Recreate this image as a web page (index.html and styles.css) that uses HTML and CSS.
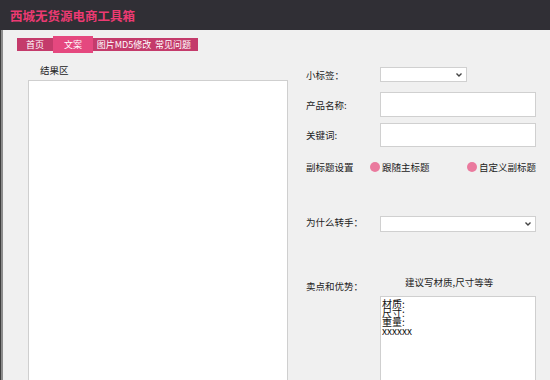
FILE: index.html
```html
<!DOCTYPE html>
<html lang="zh-CN">
<head>
<meta charset="utf-8">
<title>西城无货源电商工具箱</title>
<link rel="stylesheet" href="styles.css">
</head>
<body>
<header class="titlebar">西城无货源电商工具箱</header>
<div class="window">
  <nav class="tabs">
    <span class="tab tab-home">首页</span>
    <span class="tab tab-active">文案</span>
    <span class="tab tab-md5">图片MD5修改</span>
    <span class="tab tab-faq">常见问题</span>
  </nav>
  <div class="content">
    <section class="left">
      <div class="left-label">结果区</div>
      <textarea class="result" readonly></textarea>
    </section>
    <section class="form">
      <div class="row row-tag">
        <label class="lbl">小标签：</label>
        <div class="select select-small">
          <svg class="chev" width="8" height="6" viewBox="0 0 8 6"><path d="M1.5 1.5 L4 4 L6.5 1.5" fill="none" stroke="#444" stroke-width="1.4"/></svg>
        </div>
      </div>
      <div class="row row-name">
        <label class="lbl">产品名称:</label>
        <div class="input input-tall"></div>
      </div>
      <div class="row row-kw">
        <label class="lbl">关键词:</label>
        <div class="input input-kw"></div>
      </div>
      <div class="row row-sub">
        <label class="lbl lbl-sub">副标题设置</label>
        <span class="radio radio-1"><i class="dot"></i>跟随主标题</span>
        <span class="radio radio-2"><i class="dot"></i>自定义副标题</span>
      </div>
      <div class="row row-why">
        <label class="lbl lbl-up">为什么转手：</label>
        <div class="select select-wide">
          <svg class="chev" width="8" height="6" viewBox="0 0 8 6"><path d="M1.5 1.5 L4 4 L6.5 1.5" fill="none" stroke="#444" stroke-width="1.4"/></svg>
        </div>
      </div>
      <div class="row row-sell">
        <label class="lbl lbl-sell">卖点和优势：</label>
        <span class="hint">建议写材质,尺寸等等</span>
      </div>
      <div class="row row-area">
        <textarea class="sell" readonly>材质:
尺寸:
重量:
xxxxxx</textarea>
      </div>
    </section>
  </div>
</div>
</body>
</html>
```
FILE: styles.css
```css
html, body {
  margin: 0;
  padding: 0;
  height: 380px;
  overflow: hidden;
  background: #f0f0f0;
  font-family: "Noto Sans CJK SC", "Microsoft YaHei", "Noto Sans", sans-serif;
  color: #222;
}

.titlebar {
  height: 30px;
  background: #302f35;
  color: #ec3a72;
  font-size: 12.5px;
  font-weight: bold;
  line-height: 32px;
  padding-left: 10px;
  box-sizing: border-box;
}

.window {
  height: 350px;
  overflow: hidden;
  border-left: 1px solid #3e3e3e;
  box-shadow: inset 2px 0 0 #8c8c8c;
  padding-left: 2px;
  box-sizing: border-box;
  background: #f0f0f0;
}

.tabs {
  display: flex;
  align-items: center;
  margin: 8px 0 0 14px;
  height: 13px;
  width: 181px;
  background: #c43b6b;
  font-size: 9px;
  color: #fff;
}

.tab {
  line-height: 13px;
  white-space: nowrap;
}

.tab-home {
  width: 36px;
  text-align: center;
}

.tab-active {
  width: 40px;
  height: 17px;
  line-height: 17px;
  text-align: center;
  background: #e5487f;
}

.tab-md5 {
  width: 62px;
  text-align: center;
}

.tab-faq {
  width: 43px;
  text-align: left;
}

.content {
  display: flex;
  align-items: flex-start;
}

.left {
  margin-left: 25px;
  width: 260px;
  display: flex;
  flex-direction: column;
}

.left-label {
  margin-top: 13px;
  padding-left: 12px;
  font-size: 9.5px;
  line-height: 12px;
}

.result {
  display: block;
  margin: 4px 0 0 0;
  width: 260px;
  height: 300px;
  box-sizing: border-box;
  border: 1px solid #cfcfcf;
  border-bottom: none;
  background: #fff;
  resize: none;
  outline: none;
}

.form {
  margin-left: 18px;
  margin-top: 16px;
  width: 230px;
  display: flex;
  flex-direction: column;
}

.row {
  display: flex;
  align-items: center;
  font-size: 9.5px;
}

.lbl {
  width: 74px;
  flex: none;
  white-space: nowrap;
}

.select {
  position: relative;
  background: #fff;
  border: 1px solid #d0d0d0;
  box-sizing: border-box;
  height: 15px;
}

.chev {
  position: absolute;
  right: 3px;
  top: 4px;
}

.select-small {
  width: 87px;
}

.select-wide {
  width: 156px;
  height: 16px;
}

.input {
  width: 156px;
  background: #fff;
  border: 1px solid #d0d0d0;
  box-sizing: border-box;
}

.row-name {
  margin-top: 10px;
}

.input-tall {
  height: 25px;
}

.row-kw {
  margin-top: 6px;
}

.input-kw {
  height: 24px;
}

.row-sub {
  margin-top: 13px;
  height: 14px;
}

.lbl-sub {
  width: 64px;
}

.radio {
  display: flex;
  align-items: center;
  white-space: nowrap;
}

.radio-1 {
  width: 98px;
}

.dot {
  display: inline-block;
  width: 10px;
  height: 10px;
  border-radius: 50%;
  background: #ea7a9e;
  margin-right: 2px;
}

.row-why {
  margin-top: 42px;
  height: 16px;
}

.lbl-up {
  position: relative;
  top: -2px;
}

.row-sell {
  margin-top: 44px;
  height: 14px;
}

.lbl-sell {
  width: 99px;
  position: relative;
  top: 3px;
}

.hint {
  position: relative;
  top: -1px;
}

.row-area {
  margin-top: 6px;
  padding-left: 74px;
}

.sell {
  display: block;
  width: 156px;
  height: 84px;
  box-sizing: border-box;
  border: 1px solid #cfcfcf;
  border-bottom: none;
  background: #fff;
  margin: 0;
  padding: 2px 1px;
  font-family: "Noto Sans CJK SC", "Microsoft YaHei", sans-serif;
  font-size: 10px;
  line-height: 9px;
  color: #111;
  resize: none;
  outline: none;
  overflow: hidden;
}
```
